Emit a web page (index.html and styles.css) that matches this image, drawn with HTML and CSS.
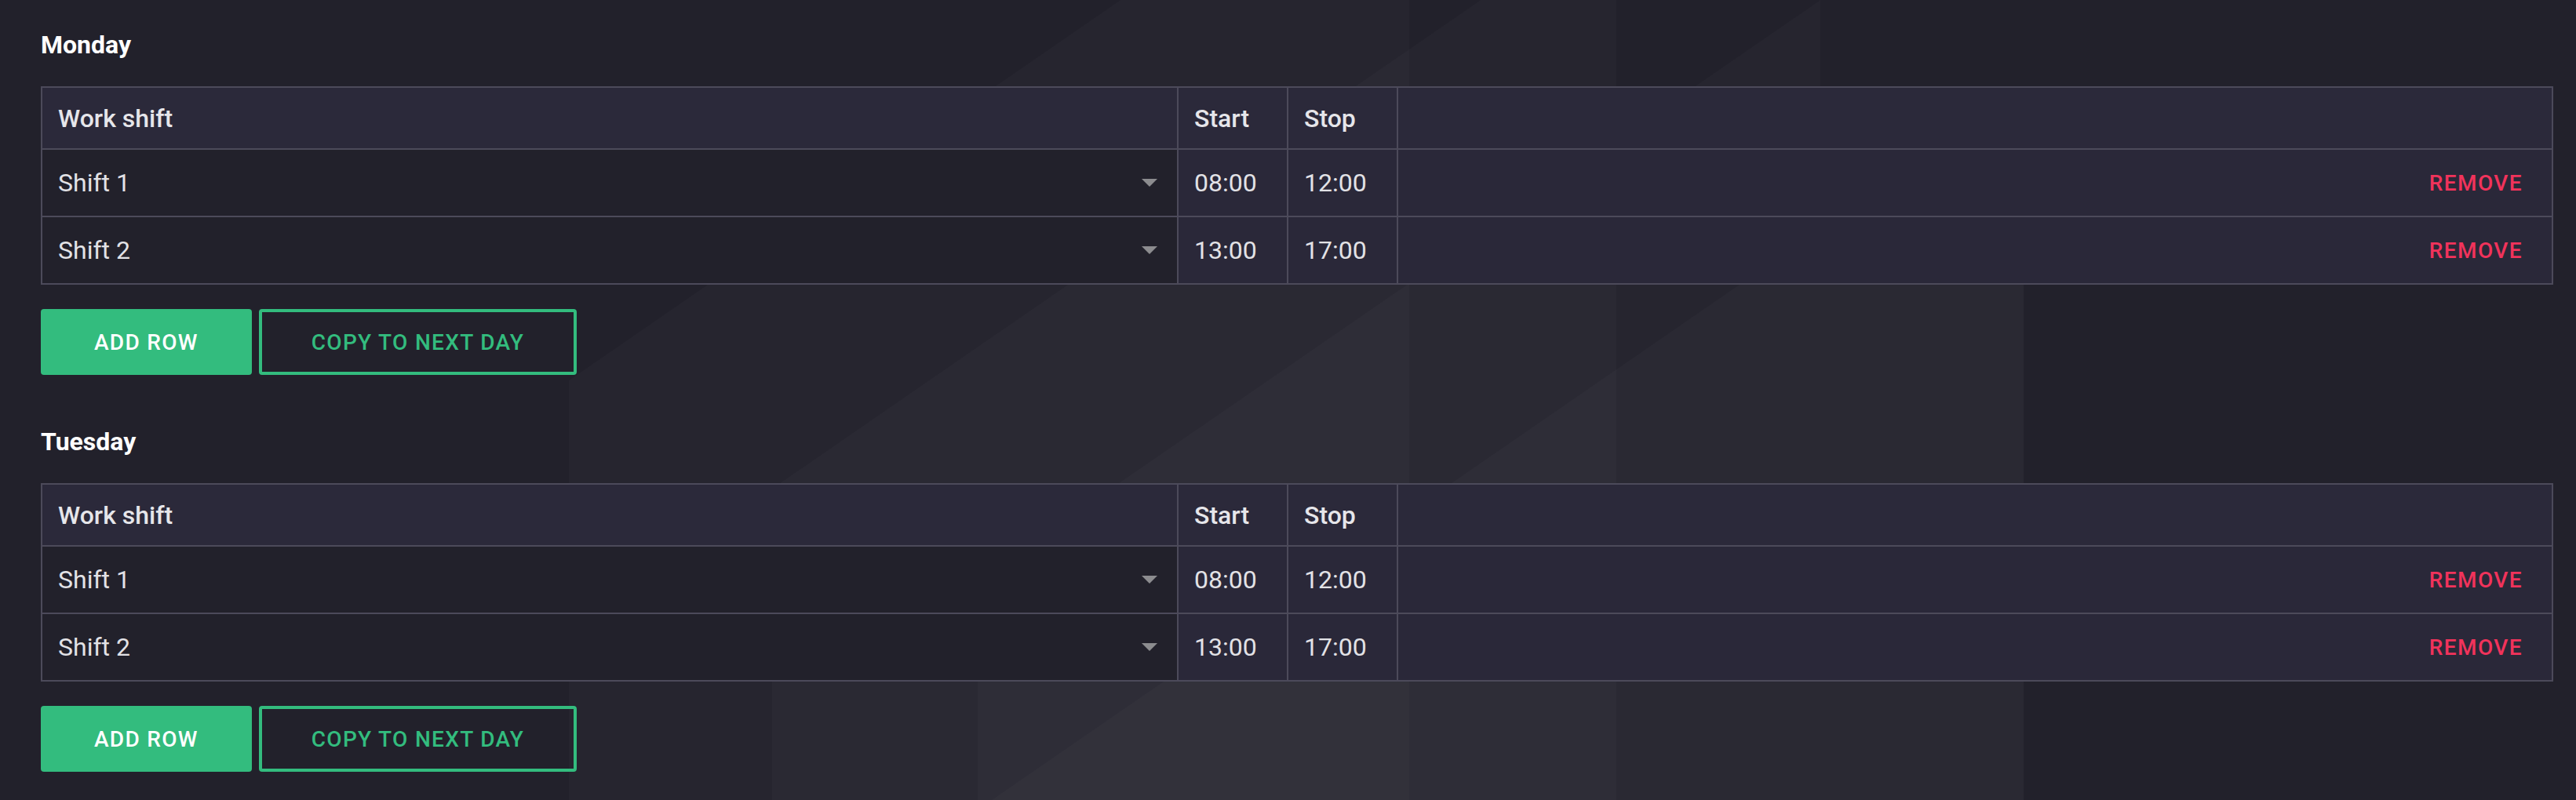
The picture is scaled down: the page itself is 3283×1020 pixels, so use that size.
FILE: index.html
```html
<!DOCTYPE html>
<html lang="en">
<head>
<meta charset="utf-8">
<title>Work shifts</title>
<link rel="stylesheet" href="styles.css">
</head>
<body>
<svg class="backdrop" width="3283" height="1020" viewBox="0 0 3283 1020" aria-hidden="true">
  <polygon class="facet" points="1428,0 1796,0 1796,1020 725,1020 725,485"/>
  <polygon class="facet" points="1887,0 2060,0 2060,1020 984,1020 984,623"/>
  <polygon class="facet" points="2320,0 2320,362 2579,362 2579,1020 1246,1020 1246,740"/>
  <polygon class="facet" points="2218,362 2579,362 2579,1020 1264,1020"/>
</svg>
<main class="page">
  <section class="day">
    <h2 class="day-title">Monday</h2>
    <table class="shifts">
      <colgroup><col class="c-shift"><col class="c-time"><col class="c-time"><col class="c-action"></colgroup>
      <thead>
        <tr><th>Work shift</th><th>Start</th><th>Stop</th><th></th></tr>
      </thead>
      <tbody>
        <tr>
          <td class="shift"><div class="select"><span>Shift 1</span><svg class="caret" width="20" height="10" viewBox="0 0 20 10"><path d="M0 0h20L10 10z"/></svg></div></td>
          <td>08:00</td><td>12:00</td>
          <td class="action"><span class="remove">REMOVE</span></td>
        </tr>
        <tr>
          <td class="shift"><div class="select"><span>Shift 2</span><svg class="caret" width="20" height="10" viewBox="0 0 20 10"><path d="M0 0h20L10 10z"/></svg></div></td>
          <td>13:00</td><td>17:00</td>
          <td class="action"><span class="remove">REMOVE</span></td>
        </tr>
      </tbody>
    </table>
    <div class="actions">
      <button class="btn btn-solid">ADD ROW</button>
      <button class="btn btn-outline">COPY TO NEXT DAY</button>
    </div>
  </section>
  <section class="day">
    <h2 class="day-title">Tuesday</h2>
    <table class="shifts">
      <colgroup><col class="c-shift"><col class="c-time"><col class="c-time"><col class="c-action"></colgroup>
      <thead>
        <tr><th>Work shift</th><th>Start</th><th>Stop</th><th></th></tr>
      </thead>
      <tbody>
        <tr>
          <td class="shift"><div class="select"><span>Shift 1</span><svg class="caret" width="20" height="10" viewBox="0 0 20 10"><path d="M0 0h20L10 10z"/></svg></div></td>
          <td>08:00</td><td>12:00</td>
          <td class="action"><span class="remove">REMOVE</span></td>
        </tr>
        <tr>
          <td class="shift"><div class="select"><span>Shift 2</span><svg class="caret" width="20" height="10" viewBox="0 0 20 10"><path d="M0 0h20L10 10z"/></svg></div></td>
          <td>13:00</td><td>17:00</td>
          <td class="action"><span class="remove">REMOVE</span></td>
        </tr>
      </tbody>
    </table>
    <div class="actions">
      <button class="btn btn-solid">ADD ROW</button>
      <button class="btn btn-outline">COPY TO NEXT DAY</button>
    </div>
  </section>
</main>
</body>
</html>
```

FILE: styles.css
```css
* { box-sizing: border-box; }

html, body {
  margin: 0;
  height: 100%;
}

body {
  background: #22212b;
  font-family: Roboto, "Liberation Sans", Arial, sans-serif;
  color: #e2e2e6;
  overflow: hidden;
  position: relative;
}

.backdrop {
  position: absolute;
  left: 0;
  top: 0;
  z-index: 0;
}

.facet {
  fill: #ffffff;
  fill-opacity: 0.02;
}

.page {
  position: relative;
  z-index: 1;
  padding: 33px 31px 0 52px;
}

.day + .day {
  margin-top: 61px;
}

.day-title {
  margin: 0;
  font-size: 32px;
  line-height: 48px;
  font-weight: 700;
  color: #ffffff;
}

.shifts {
  margin-top: 29px;
  width: 3200px;
  table-layout: fixed;
  border-collapse: collapse;
  border: 2px solid #4c4a5a;
}

.c-shift { width: 1448px; }
.c-time { width: 140px; }
.c-action { width: 1472px; }

.shifts th,
.shifts td {
  border: 2px solid #4c4a5a;
  padding: 0 20px;
  font-size: 32px;
  line-height: 40px;
  text-align: left;
  vertical-align: middle;
  white-space: nowrap;
}

.shifts thead tr { height: 79px; }
.shifts tbody tr { height: 86px; }

.shifts th {
  background: #2b293a;
  font-weight: 500;
  color: #e6e6ea;
}

.shifts td {
  background: #2a2839;
  font-weight: 400;
  color: #e2e2e6;
}

.shifts td.shift {
  background: #22212b;
}

.select {
  display: flex;
  align-items: center;
  justify-content: space-between;
}

.caret {
  fill: #8c8c8f;
  margin-right: 5px;
}

.shifts td.action {
  text-align: right;
  padding-right: 37px;
}

.remove {
  font-size: 28px;
  font-weight: 500;
  letter-spacing: 1.4px;
  color: #f1335b;
}

.actions {
  margin-top: 31px;
  display: flex;
  gap: 9px;
}

.btn {
  height: 84px;
  border-radius: 4px;
  font-family: inherit;
  font-size: 28px;
  font-weight: 500;
  letter-spacing: 1.3px;
  cursor: pointer;
}

.btn-solid {
  background: #33bc7e;
  color: #ffffff;
  border: none;
  padding: 0 68px;
}

.btn-outline {
  background: transparent;
  color: #33bc7e;
  border: 4px solid #33bc7e;
  padding: 0 63px;
}
```
